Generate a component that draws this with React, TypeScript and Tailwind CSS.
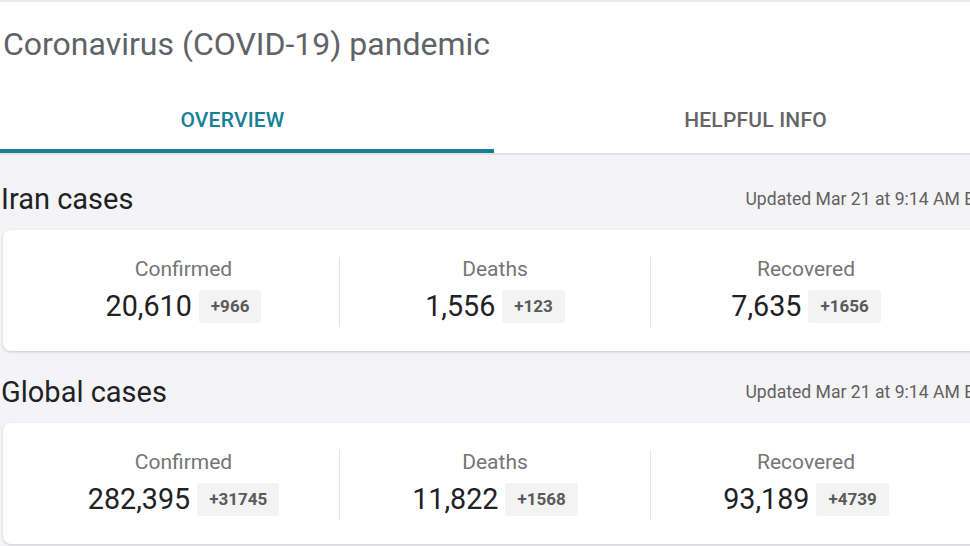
import React from 'react';

interface Stat {
  label: string;
  value: string;
  delta: string;
}

interface Section {
  title: string;
  updated: string;
  stats: Stat[];
}

const sections: Section[] = [
  {
    title: 'Iran cases',
    updated: 'Updated Mar 21 at 9:14 AM EDT',
    stats: [
      { label: 'Confirmed', value: '20,610', delta: '+966' },
      { label: 'Deaths', value: '1,556', delta: '+123' },
      { label: 'Recovered', value: '7,635', delta: '+1656' },
    ],
  },
  {
    title: 'Global cases',
    updated: 'Updated Mar 21 at 9:14 AM EDT',
    stats: [
      { label: 'Confirmed', value: '282,395', delta: '+31745' },
      { label: 'Deaths', value: '11,822', delta: '+1568' },
      { label: 'Recovered', value: '93,189', delta: '+4739' },
    ],
  },
];

function StatCard({ stats }: { stats: Stat[] }) {
  return (
    <div className="bg-white rounded-[8px] shadow-[0_1px_3px_rgba(0,0,0,0.18)] px-[25px] pt-[27px] pb-[24px] flex">
      {stats.map((s, i) => (
        <div
          key={s.label}
          className={`w-[311px] flex flex-col items-center ${i > 0 ? 'border-l border-[#e4e4e4]' : ''}`}
        >
          <div className="text-[21px] leading-[24px] text-[#757575]">{s.label}</div>
          <div className="mt-[9px] flex items-center gap-[7px]">
            <span className="text-[28.7px] leading-[33px] text-[#202124]">{s.value}</span>
            <span className="bg-[#f3f3f3] rounded-[3px] h-[33px] px-[12px] flex items-center text-[17px] font-bold text-[#5a5a5a]">
              {s.delta}
            </span>
          </div>
          <div className="h-[4px]" />
        </div>
      ))}
    </div>
  );
}

export default function App() {
  return (
    <div
      className="w-[970px] h-[546px] overflow-hidden bg-[#f4f4f6]"
      style={{ fontFamily: 'Roboto, "Noto Sans", Arial, sans-serif' }}
    >
      {/* header */}
      <div className="bg-white border-t-2 border-[#ebebeb]">
        <div className="pt-[24px] pl-[3px] h-[87px]">
          <h1 className="text-[32px] leading-[36px] text-[#5f6368] whitespace-nowrap">
            Coronavirus (COVID-19) pandemic
          </h1>
        </div>
        <div className="flex ml-[-29px] border-b-2 border-[#e2e2e4]">
          <div className="w-[523px] shrink-0 h-[64px] flex items-center justify-center border-b-4 border-[#177f98] pt-[4px]">
            <span className="text-[21px] font-medium tracking-[0.2px] text-[#177f98]">OVERVIEW</span>
          </div>
          <div className="w-[523px] shrink-0 h-[64px] flex items-center justify-center">
            <span className="text-[21px] font-medium tracking-[0.2px] text-[#656565]">HELPFUL INFO</span>
          </div>
        </div>
      </div>

      {/* sections */}
      <div className="ml-[3px] w-[993px]">
        {sections.map((sec, i) => (
          <div key={sec.title}>
            <div className={`flex items-center justify-between ${i === 0 ? 'h-[75px] pt-[13px]' : 'h-[72px] pt-[10px]'}`}>
              <h2 className="text-[29px] leading-[32px] text-[#202124] -ml-[2px]">{sec.title}</h2>
              <span className="text-[17.6px] text-[#616161] whitespace-nowrap">{sec.updated}</span>
            </div>
            <StatCard stats={sec.stats} />
          </div>
        ))}
      </div>
    </div>
  );
}
